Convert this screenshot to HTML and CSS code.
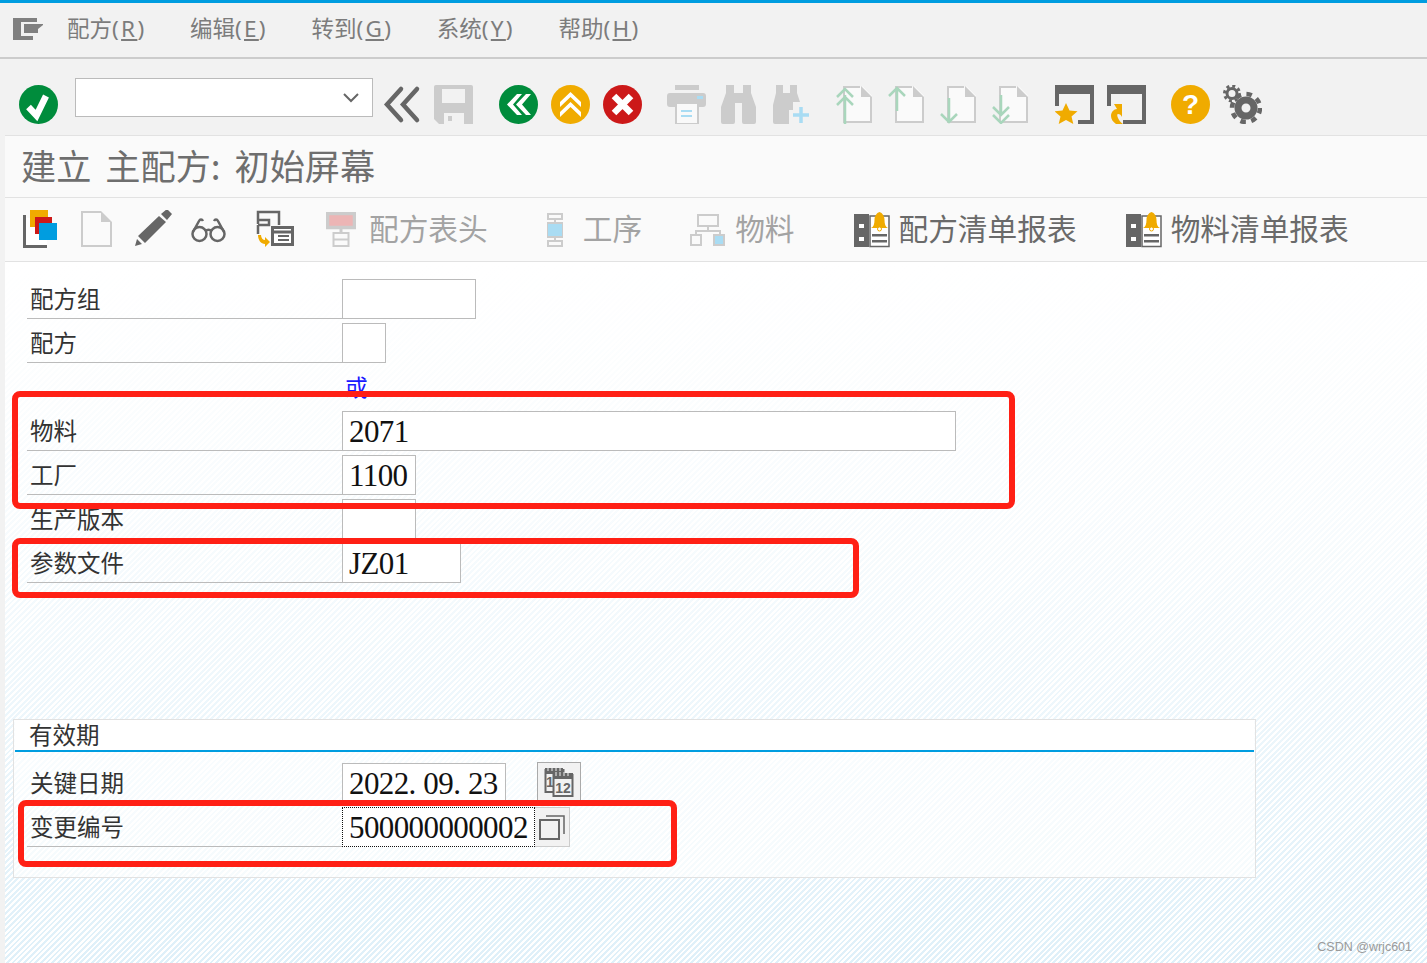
FILE: index.html
```html
<!DOCTYPE html>
<html lang="zh-CN">
<head>
    <meta charset="UTF-8">
    <meta name="viewport" content="width=device-width, initial-scale=1.0">
    <title>建立 主配方: 初始屏幕</title>
    <link rel="stylesheet" href="styles.css">
</head>
<body>
    <svg class="defs" width="0" height="0">
        <symbol id="doc" viewBox="0 0 39 39">
            <path d="M8 1.500h20l9 9v27H8z" fill="#fafafa"/>
            <path d="M25 2H9v35h27V12" fill="none" stroke="#ccc" stroke-width="2"/>
            <path d="M26 1l11 11H26z" fill="#ccc"/>
        </symbol>
        <symbol id="bell-doc" viewBox="0 0 36 36">
            <rect x="0" y="2" width="15" height="33" fill="#666"/>
            <rect x="5" y="12" width="5" height="4" fill="#fff"/>
            <rect x="5" y="25" width="5" height="4" fill="#fff"/>
            <path d="M16 4h19v30.500H16z" fill="#fff" stroke="#666" stroke-width="1.500"/>
            <rect x="18" y="22" width="15" height="2.500" fill="#666"/>
            <rect x="18" y="28" width="15" height="2.500" fill="#666"/>
            <path d="M17 16c2.500-1 3.500-4 3.500-8 0-4 2-7 5-8 3 1 5 4 5 8 0 4 1 7 3.500 8z" fill="#f0ab00"/>
            <circle cx="25.500" cy="17" r="2" fill="#fff" stroke="#f0ab00" stroke-width="1"/>
        </symbol>
    </svg>

    <div class="menu-bar">
        <svg class="menu-icon" viewBox="0 0 31 22" width="31" height="22">
            <path d="M0 0h24v4H8v14h12v4H0z" fill="#808080"/>
            <path d="M11 6h19v1l-5 4v4H11z" fill="#808080"/>
        </svg>
        <span class="menu-item">配方<span class="key">(<u>R</u>)</span></span>
        <span class="menu-item">编辑<span class="key">(<u>E</u>)</span></span>
        <span class="menu-item">转到<span class="key">(<u>G</u>)</span></span>
        <span class="menu-item">系统<span class="key">(<u>Y</u>)</span></span>
        <span class="menu-item">帮助<span class="key">(<u>H</u>)</span></span>
    </div>

    <div class="tool-bar">
        <svg class="icon" viewBox="0 0 39 39">
            <circle cx="19.500" cy="19.500" r="19.500" fill="#008c3c"/>
            <path d="M9.500 22l8 8.500L27 11" fill="none" stroke="#fff" stroke-width="6.500"/>
        </svg>
        <div class="combo">
            <svg viewBox="0 0 18 12" width="18" height="12">
                <path d="M2 2l7 7 7-7" fill="none" stroke="#666" stroke-width="2"/>
            </svg>
        </div>
        <svg class="icon back-icon" viewBox="0 0 39 39">
            <path d="M19 4L5 19.500 19 35M35 4L21 19.500 35 35" fill="none" stroke="#666" stroke-width="4.500" stroke-linecap="round"/>
        </svg>
        <svg class="icon save-icon" viewBox="0 0 39 39">
            <path d="M2 0h35a2 2 0 0 1 2 2v37H5l-5-5V2a2 2 0 0 1 2-2z" fill="#ccc"/>
            <rect x="8" y="4" width="23" height="14" fill="#f2f2f2"/>
            <rect x="10" y="28" width="20" height="11" fill="#f2f2f2"/>
            <rect x="14" y="31" width="4" height="5" fill="#ccc"/>
        </svg>

        <div class="tool-group nav-group">
            <svg class="icon" viewBox="0 0 39 39">
                <circle cx="19.500" cy="19.500" r="19.500" fill="#008c3c"/>
                <path d="M18 9L8 19.500 18 30h5L14 19.500 23 9zM27 9L17 19.500 27 30h5L23 19.500 32 9z" fill="#fff"/>
            </svg>
            <svg class="icon" viewBox="0 0 39 39">
                <circle cx="19.500" cy="19.500" r="19.500" fill="#f0ab00"/>
                <path d="M19.500 7L9 17v5l10.500-10L30 22v-5zM19.500 17L9 27v5l10.500-10L30 32v-5z" fill="#fff"/>
            </svg>
            <svg class="icon" viewBox="0 0 39 39">
                <circle cx="19.500" cy="19.500" r="19.500" fill="#cc1919"/>
                <path d="M11 11l17 17M28 11L11 28" stroke="#fff" stroke-width="6.500"/>
            </svg>
        </div>

        <div class="tool-group">
            <svg class="icon" viewBox="0 0 39 39">
                <path d="M8 0h24v5H8z" fill="#ccc"/>
                <rect x="0" y="8" width="39" height="14" rx="3" fill="#ccc"/>
                <rect x="30" y="11" width="6" height="3" fill="#a9dcf3"/>
                <rect x="9" y="18" width="22" height="21" fill="#f9f9f9" stroke="#ccc" stroke-width="2"/>
                <rect x="14" y="25" width="11" height="2" fill="#a9dcf3"/>
                <rect x="14" y="30" width="11" height="2" fill="#a9dcf3"/>
            </svg>
            <svg class="icon" viewBox="0 0 39 39">
                <path d="M7 0h8v8h9V0h8v8l5 14v15a2 2 0 0 1-2 2H25a2 2 0 0 1-2-2V18h-7v19a2 2 0 0 1-2 2H4a2 2 0 0 1-2-2V22l5-14z" fill="#ccc"/>
            </svg>
            <svg class="icon" viewBox="0 0 39 39">
                <path d="M5 0h7v8h7V0h7v8l3 9H22v8h-4v14H4a2 2 0 0 1-2-2V20L5 8z" fill="#ccc"/>
                <path d="M30 22v16M22 30h16" stroke="#a9dcf3" stroke-width="3.500"/>
            </svg>
        </div>

        <div class="tool-group">
            <svg class="icon" viewBox="0 0 39 39">
                <use href="#doc"/>
                <path d="M10 39V10M2 12l8-8 8 8M2 20l8-8 8 8" fill="none" stroke="#a9d6bc" stroke-width="2.500"/>
            </svg>
            <svg class="icon" viewBox="0 0 39 39">
                <use href="#doc"/>
                <path d="M10 26V3M2 11l8-8 8 8" fill="none" stroke="#a9d6bc" stroke-width="2.500"/>
            </svg>
            <svg class="icon" viewBox="0 0 39 39">
                <use href="#doc"/>
                <path d="M10 13v24M2 29l8 8 8-8" fill="none" stroke="#a9d6bc" stroke-width="2.500"/>
            </svg>
            <svg class="icon" viewBox="0 0 39 39">
                <use href="#doc"/>
                <path d="M10 10v20M2 22l8 8 8-8M2 30l8 8 8-8" fill="none" stroke="#a9d6bc" stroke-width="2.500"/>
            </svg>
        </div>

        <div class="tool-group">
            <svg class="icon" viewBox="0 0 39 39">
                <path d="M0 0h39v39H23v-4h12V9H4v12H0z" fill="#666"/>
                <path d="M11 18l3.500 7.500 8 .8-6 5.200 1.800 7.500-7.300-4-7.300 4 1.800-7.500-6-5.200 8-.8z" fill="#f0ab00"/>
            </svg>
            <svg class="icon" viewBox="0 0 39 39">
                <path d="M0 0h39v39H16v-4h19V9H4v12H0z" fill="#666"/>
                <path d="M15 19v13c-1-2-2-3-4-3-1 0-1 2 0 4 1 2 2 4 5 6H9c-3-2-5-5-5-8 0-4 3-7 6-7l-3-5z" fill="#f0ab00"/>
            </svg>
        </div>

        <div class="tool-group">
            <svg class="icon" viewBox="0 0 39 39">
                <circle cx="19.500" cy="19.500" r="19.500" fill="#f0ab00"/>
                <text x="19.500" y="29" class="help-mark">?</text>
            </svg>
            <svg class="icon" viewBox="0 0 39 39">
                <circle cx="9" cy="8.500" r="5" fill="none" stroke="#666" stroke-width="3"/>
                <circle cx="9" cy="8.500" r="7.500" fill="none" stroke="#666" stroke-width="3" stroke-dasharray="3 2.890"/>
                <circle cx="23" cy="23" r="8" fill="none" stroke="#666" stroke-width="7"/>
                <circle cx="23" cy="23" r="14" fill="none" stroke="#666" stroke-width="4.500" stroke-dasharray="5.500 5.500"/>
            </svg>
        </div>
    </div>

    <div class="main">
        <div class="title-bar">建立 主配方: 初始屏幕</div>

        <div class="app-bar">
            <svg class="app-icon" viewBox="0 0 39 39">
                <path d="M2 5h3v30h21v3H2z" fill="#666"/>
                <rect x="5" y="8" width="21" height="27" fill="#fff"/>
                <rect x="9" y="0" width="18" height="17" fill="#f0ab00"/>
                <rect x="14" y="7" width="17" height="17" fill="#cc1919"/>
                <rect x="18" y="13" width="18" height="17" fill="#009de0"/>
            </svg>
            <svg class="app-icon" viewBox="0 0 39 39">
                <path d="M4 2h22l9 9v26H4z" fill="#fafafa"/>
                <path d="M24 2H5v34h29V12" fill="none" stroke="#ccc" stroke-width="2"/>
                <path d="M24 1l11 11H24z" fill="#ccc"/>
            </svg>
            <svg class="app-icon" viewBox="0 0 39 39">
                <path d="M28 4l6-5 5 5-5 6zM26 6l7 6L12 33l-7-7zM4 29l5 5-7 2z" fill="#666"/>
            </svg>
            <svg class="app-icon" viewBox="0 0 39 39">
                <circle cx="10.500" cy="24" r="7" fill="none" stroke="#666" stroke-width="2.500"/>
                <circle cx="28.500" cy="24" r="7" fill="none" stroke="#666" stroke-width="2.500"/>
                <path d="M16 21c2-1.500 5-1.500 7 0M4 22L10 11c1-2 3-2 4 0M35 22L29 11c-1-2-3-2-4 0" fill="none" stroke="#666" stroke-width="2.500"/>
            </svg>
            <svg class="app-icon layout-icon" viewBox="0 0 39 39">
                <path d="M3 14V2h21v13M3 10h11v5H3M3 15v9" fill="none" stroke="#666" stroke-width="2.500"/>
                <rect x="17.500" y="17.500" width="20" height="17" fill="#fff" stroke="#666" stroke-width="3"/>
                <path d="M17 22h21" stroke="#666" stroke-width="3"/>
                <path d="M23 26h11M23 30h11" stroke="#666" stroke-width="2"/>
                <path d="M3 25h3c0 3 2 5 4 5v-3l5 5-5 5v-3c-4 0-7-4-7-9z" fill="#f0ab00"/>
            </svg>

            <div class="app-btn header-btn is-off">
                <svg class="app-icon" viewBox="0 0 30 35">
                    <rect x="1.500" y="1.500" width="27" height="14" fill="#ecb5b5" stroke="#ccc" stroke-width="3.500"/>
                    <rect x="13.500" y="15" width="3" height="6" fill="#ccc"/>
                    <rect x="7.500" y="21" width="15" height="13" fill="#fafafa" stroke="#ccc" stroke-width="2"/>
                    <rect x="7.500" y="26.500" width="15" height="2" fill="#ccc"/>
                </svg>
                <span>配方表头</span>
            </div>
            <div class="app-btn oper-btn is-off">
                <svg class="app-icon" viewBox="0 0 16 34">
                    <rect x="1" y="1" width="14" height="5" fill="#fafafa" stroke="#ccc" stroke-width="2"/>
                    <rect x="7" y="6" width="2" height="4" fill="#ccc"/>
                    <rect x="0" y="10" width="16" height="14" fill="#a9dcf3" stroke="#ccc" stroke-width="2"/>
                    <rect x="7" y="24" width="2" height="4" fill="#ccc"/>
                    <rect x="1" y="28" width="14" height="5" fill="#fafafa" stroke="#ccc" stroke-width="2"/>
                </svg>
                <span>工序</span>
            </div>
            <div class="app-btn mat-btn is-off">
                <svg class="app-icon" viewBox="0 0 35 32">
                    <rect x="8" y="1" width="20" height="11" fill="#fafafa" stroke="#ccc" stroke-width="2"/>
                    <path d="M18 12v5M6 21v-4h24v4" fill="none" stroke="#ccc" stroke-width="2"/>
                    <rect x="1" y="21" width="10" height="10" fill="#fafafa" stroke="#ccc" stroke-width="2"/>
                    <rect x="24" y="21" width="10" height="10" fill="#a9dcf3" stroke="#ccc" stroke-width="2"/>
                </svg>
                <span>物料</span>
            </div>
            <div class="app-btn report-btn">
                <svg class="app-icon"><use href="#bell-doc"/></svg>
                <span>配方清单报表</span>
            </div>
            <div class="app-btn report-btn">
                <svg class="app-icon"><use href="#bell-doc"/></svg>
                <span>物料清单报表</span>
            </div>
        </div>

        <div class="content">
            <div class="form">
                <div class="field-row">
                    <div class="field-label">配方组</div>
                    <div class="field-input w-group"></div>
                </div>
                <div class="field-row">
                    <div class="field-label">配方</div>
                    <div class="field-input w-recipe"></div>
                </div>
                <div class="field-row or-row">或</div>
                <div class="field-row">
                    <div class="field-label">物料</div>
                    <div class="field-input w-material">2071</div>
                </div>
                <div class="field-row">
                    <div class="field-label">工厂</div>
                    <div class="field-input w-plant">1100</div>
                </div>
                <div class="field-row">
                    <div class="field-label">生产版本</div>
                    <div class="field-input w-plant"></div>
                </div>
                <div class="field-row">
                    <div class="field-label">参数文件</div>
                    <div class="field-input w-profile">JZ01</div>
                </div>
            </div>

            <div class="group-box">
                <div class="group-title">有效期</div>
                <div class="group-body">
                    <div class="field-row">
                        <div class="field-label">关键日期</div>
                        <div class="field-input w-date">2022<span class="dot">.</span>09<span class="dot">.</span>23</div>
                        <div class="cal-btn">
                            <svg viewBox="0 0 30 30" width="30" height="30">
                                <rect x="1.500" y="3" width="18" height="22" fill="#f2f2f2" stroke="#666" stroke-width="2"/>
                                <rect x="1" y="1" width="18" height="6" fill="#666"/>
                                <path d="M4 0v4M8 0v4M12 0v4M16 0v4" stroke="#f2f2f2" stroke-width="1"/>
                                <text x="6" y="20" class="cal-day">1</text>
                                <rect x="9.500" y="8" width="19" height="21" fill="#f2f2f2" stroke="#666" stroke-width="2"/>
                                <rect x="9" y="6" width="20" height="6" fill="#666"/>
                                <path d="M12 5v4M16 5v4M20 5v4M24 5v4" stroke="#f2f2f2" stroke-width="1"/>
                                <text x="19" y="26" class="cal-day">12</text>
                            </svg>
                        </div>
                    </div>
                    <div class="field-row">
                        <div class="field-label">变更编号</div>
                        <div class="field-input w-change">500000000002</div>
                        <div class="pick-btn">
                            <svg viewBox="0 0 26 26" width="26" height="26">
                                <rect x="1" y="6" width="19" height="19" fill="none" stroke="#666" stroke-width="2"/>
                                <path d="M7 2h18v18" fill="none" stroke="#666" stroke-width="1.500"/>
                            </svg>
                        </div>
                    </div>
                </div>
            </div>
        </div>
    </div>

    <div class="mark mark-material"></div>
    <div class="mark mark-profile"></div>
    <div class="mark mark-change"></div>
    <div class="watermark">CSDN @wrjc601</div>
</body>
</html>
```

FILE: styles.css
```css
html, body {
    margin: 0;
    padding: 0;
    height: 100%;
}

body {
    position: relative;
    display: flex;
    flex-direction: column;
    height: 963px;
    overflow: hidden;
    background: #f2f2f2;
    font-family: "Liberation Serif", "Noto Sans CJK SC", serif;
    color: #222;
}

.defs {
    position: absolute;
}

.menu-bar {
    display: flex;
    align-items: center;
    box-sizing: border-box;
    height: 59px;
    padding: 0 0 5px 13px;
    border-top: 3px solid #009de0;
    border-bottom: 2px solid #cccccc;
    font-family: "Noto Sans", "Noto Sans CJK SC", sans-serif;
    font-size: 22.500px;
    color: #7c7c7c;
}

.menu-icon {
    margin: 3px 23px 0 0;
}

.menu-item {
    margin-right: 43.500px;
    white-space: nowrap;
}

.key {
    letter-spacing: 2.300px;
}

.tool-bar {
    display: flex;
    align-items: flex-start;
    height: 76px;
    padding: 26px 0 0 19px;
    box-sizing: border-box;
}

.icon {
    display: block;
    flex: none;
    width: 39px;
    height: 39px;
}

.combo {
    display: flex;
    align-items: center;
    justify-content: flex-end;
    box-sizing: border-box;
    width: 298px;
    height: 39px;
    margin: -7px 0 0 17px;
    padding-right: 12px;
    background: #fff;
    border: 1px solid #bbbbbb;
}

.back-icon {
    margin-left: 9px;
}

.save-icon {
    margin-left: 13px;
}

.tool-group {
    display: flex;
    gap: 13px;
    margin-left: 25px;
}

.nav-group {
    margin-left: 26px;
}

.help-mark {
    font-family: "Liberation Sans", sans-serif;
    font-size: 28px;
    font-weight: bold;
    fill: #fff;
    text-anchor: middle;
}

.main {
    flex: 1;
    display: flex;
    flex-direction: column;
    margin-left: 5px;
}

.title-bar {
    height: 61px;
    padding-left: 16px;
    line-height: 58px;
    background: #fafafa;
    border-top: 1px solid #e2e2e2;
    border-bottom: 1px solid #e2e2e2;
    font-family: "Noto Sans CJK SC", sans-serif;
    font-size: 35.200px;
    word-spacing: 6px;
    color: #6e6e6e;
    white-space: nowrap;
}

.app-bar {
    display: flex;
    align-items: center;
    height: 63px;
    padding-left: 16px;
    background: #fafafa;
    border-bottom: 1px solid #e2e2e2;
    font-family: "Noto Sans CJK SC", sans-serif;
    font-size: 29.700px;
    color: #6a6a6a;
}

.app-icon {
    display: block;
    flex: none;
    width: 39px;
    height: 39px;
    margin-right: 17px;
}

.layout-icon {
    margin: 0 0 0 10px;
}

.app-btn {
    display: flex;
    align-items: center;
    white-space: nowrap;
}

.app-btn span {
    margin-bottom: 4px;
}

.app-btn .app-icon {
    margin-right: 0;
}

.is-off {
    color: #a3a3a3;
}

.header-btn {
    margin-left: 32px;
}

.header-btn .app-icon {
    width: 30px;
    height: 35px;
    margin-right: 13px;
}

.oper-btn {
    margin-left: 59px;
}

.oper-btn .app-icon {
    width: 16px;
    height: 34px;
    margin-right: 20px;
}

.mat-btn {
    margin-left: 48px;
}

.mat-btn .app-icon {
    width: 35px;
    height: 32px;
    margin-right: 10px;
}

.report-btn {
    margin-left: 59px;
}

.report-btn .app-icon {
    width: 36px;
    height: 36px;
    margin-right: 9px;
}

.report-btn + .report-btn {
    margin-left: 49px;
}

.content {
    flex: 1;
    padding-top: 17px;
    background:
        linear-gradient(to bottom, #fff 0%, rgba(255,255,255,0.75) 40%, rgba(255,255,255,0) 100%),
        repeating-linear-gradient(135deg, #dff0f9 0, #dff0f9 2px, #ffffff 2px, #ffffff 4px);
}

.form {
    padding-left: 22px;
}

.field-row {
    display: flex;
    align-items: flex-start;
    height: 40px;
    margin-bottom: 4px;
}

.field-label {
    box-sizing: border-box;
    width: 315px;
    height: 40px;
    padding-left: 3px;
    line-height: 38px;
    border-bottom: 1px solid #bbbbbb;
    font-family: "Noto Sans CJK SC", sans-serif;
    font-size: 23.500px;
    color: #333;
}

.field-input {
    box-sizing: border-box;
    height: 40px;
    padding-left: 6px;
    line-height: 40px;
    background: #fff;
    border: 1px solid #bbbbbb;
    font-family: "Liberation Serif", serif;
    font-size: 31px;
    letter-spacing: -0.600px;
    color: #111;
    white-space: nowrap;
}

.or-row {
    padding-left: 318px;
    line-height: 39px;
    font-family: "Noto Sans CJK SC", sans-serif;
    font-size: 23px;
    color: #1a1aff;
}

.w-group { width: 134px; }
.w-recipe { width: 44px; }
.w-material { width: 614px; }
.w-plant { width: 74px; }
.w-profile { width: 119px; }
.w-date { width: 164px; }

.w-change {
    width: 193px;
    border: 1px dotted #111;
}

.dot {
    letter-spacing: 7px;
}

.group-box {
    box-sizing: border-box;
    width: 1243px;
    height: 159px;
    margin: 136px 0 0 8px;
    background: rgba(255,255,255,0.65);
    border: 1px solid #e2e2e2;
}

.group-title {
    height: 30px;
    margin: 0 1px;
    padding-left: 14px;
    line-height: 29px;
    background: #fff;
    border-bottom: 2px solid #009de0;
    font-family: "Noto Sans CJK SC", sans-serif;
    font-size: 23.500px;
    color: #333;
}

.group-body {
    padding: 11px 0 0 13px;
}

.cal-btn {
    display: flex;
    align-items: center;
    justify-content: center;
    box-sizing: border-box;
    width: 44px;
    height: 40px;
    margin: -1px 0 0 31px;
    background: #f2f2f2;
    border: 1px solid #aaaaaa;
}

.cal-day {
    font-family: "Liberation Sans", sans-serif;
    font-size: 14px;
    font-weight: bold;
    fill: #666;
    text-anchor: middle;
}

.pick-btn {
    display: flex;
    align-items: center;
    justify-content: center;
    box-sizing: border-box;
    width: 35px;
    height: 40px;
    background: #f2f2f2;
    border: 1px solid #cccccc;
    border-left: 0;
}

.mark {
    position: absolute;
    box-sizing: border-box;
    border: 6px solid #ff2015;
    border-radius: 8px;
}

.mark-material {
    left: 12px;
    top: 391px;
    width: 1003px;
    height: 118px;
}

.mark-profile {
    left: 12px;
    top: 538px;
    width: 847px;
    height: 60px;
}

.mark-change {
    left: 18px;
    top: 800px;
    width: 659px;
    height: 67px;
}

.watermark {
    position: absolute;
    right: 15px;
    bottom: 9px;
    font-family: "Liberation Sans", sans-serif;
    font-size: 12.500px;
    color: #9a9a9a;
}
```
